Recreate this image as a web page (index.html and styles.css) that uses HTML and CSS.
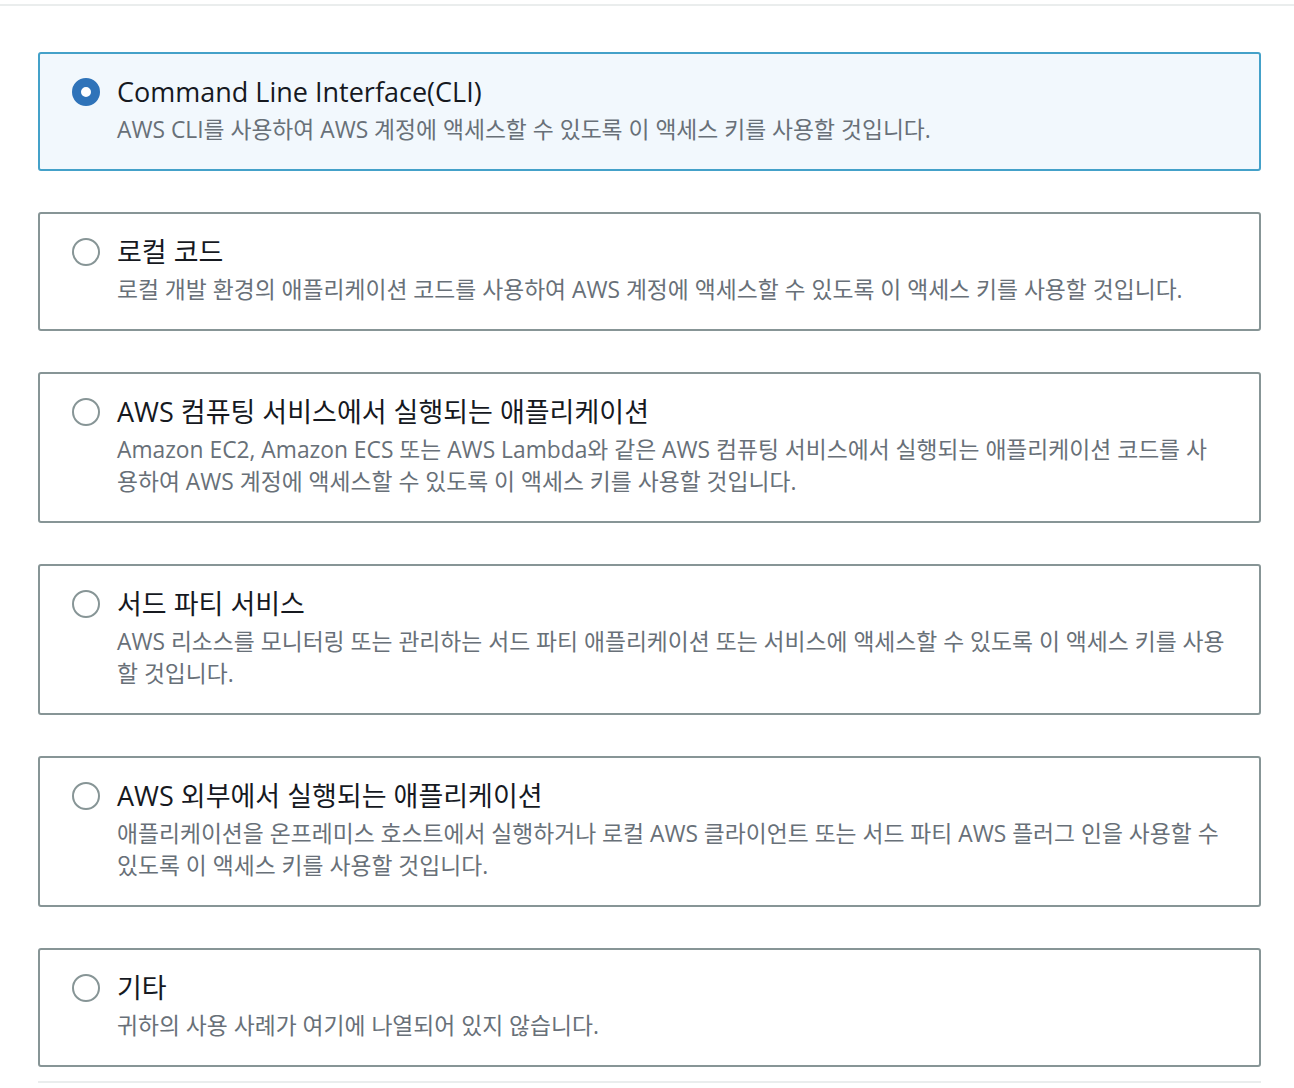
FILE: index.html
```html
<!DOCTYPE html>
<html lang="ko">
<head>
    <meta charset="UTF-8">
    <meta name="viewport" content="width=device-width, initial-scale=1.0">
    <title>액세스 키 사용 사례</title>
    <link rel="stylesheet" href="styles.css">
</head>
<body>

    <div class="top-rule"></div>

    <div class="use-cases">
        <div class="tile selected">
            <span class="radio"></span>
            <div class="tile-text">
                <div class="tile-title">Command Line Interface(CLI)</div>
                <div class="tile-desc">AWS CLI를 사용하여 AWS 계정에 액세스할 수 있도록 이 액세스 키를 사용할 것입니다.</div>
            </div>
        </div>

        <div class="tile">
            <span class="radio"></span>
            <div class="tile-text">
                <div class="tile-title">로컬 코드</div>
                <div class="tile-desc">로컬 개발 환경의 애플리케이션 코드를 사용하여 AWS 계정에 액세스할 수 있도록 이 액세스 키를 사용할 것입니다.</div>
            </div>
        </div>

        <div class="tile">
            <span class="radio"></span>
            <div class="tile-text">
                <div class="tile-title">AWS 컴퓨팅 서비스에서 실행되는 애플리케이션</div>
                <div class="tile-desc">Amazon EC2, Amazon ECS 또는 AWS Lambda와 같은 AWS 컴퓨팅 서비스에서 실행되는 애플리케이션 코드를 사용하여 AWS 계정에 액세스할 수 있도록 이 액세스 키를 사용할 것입니다.</div>
            </div>
        </div>

        <div class="tile">
            <span class="radio"></span>
            <div class="tile-text">
                <div class="tile-title">서드 파티 서비스</div>
                <div class="tile-desc">AWS 리소스를 모니터링 또는 관리하는 서드 파티 애플리케이션 또는 서비스에 액세스할 수 있도록 이 액세스 키를 사용할 것입니다.</div>
            </div>
        </div>

        <div class="tile">
            <span class="radio"></span>
            <div class="tile-text">
                <div class="tile-title">AWS 외부에서 실행되는 애플리케이션</div>
                <div class="tile-desc">애플리케이션을 온프레미스 호스트에서 실행하거나 로컬 AWS 클라이언트 또는 서드 파티 AWS 플러그 인을 사용할 수 있도록 이 액세스 키를 사용할 것입니다.</div>
            </div>
        </div>

        <div class="tile">
            <span class="radio"></span>
            <div class="tile-text">
                <div class="tile-title">기타</div>
                <div class="tile-desc">귀하의 사용 사례가 여기에 나열되어 있지 않습니다.</div>
            </div>
        </div>

        <div class="bottom-rule"></div>
    </div>

</body>
</html>
```

FILE: styles.css
```css
body {
    margin: 0;
    padding: 0;
    background-color: #fff;
    font-family: "Open Sans", "Noto Sans CJK KR", sans-serif;
    color: #16191f;
}

.top-rule {
    height: 2px;
    margin-top: 4px;
    background-color: #eaeded;
}

.use-cases {
    display: flex;
    flex-direction: column;
    gap: 41px;
    padding: 46px 33px 0 38px;
}

.tile {
    display: flex;
    align-items: flex-start;
    gap: 17px;
    padding: 20px 32px 23px 32px;
    border: 2px solid #879596;
    border-radius: 3px;
    background-color: #fff;
}

.tile.selected {
    border-color: #44a1c9;
    background-color: #f2f8fd;
}

.radio {
    flex: none;
    box-sizing: border-box;
    width: 28px;
    height: 28px;
    margin-top: 4px;
    border: 2px solid #879596;
    border-radius: 50%;
    background-color: #fff;
}

.tile.selected .radio {
    border: 9px solid #2f73b9;
}

.tile-text {
    flex: 1;
    min-width: 0;
}

.tile-title {
    font-size: 27px;
    line-height: 36px;
    color: #16191f;
}

.tile-desc {
    margin-top: 4px;
    font-size: 22.8px;
    line-height: 32px;
    color: #687078;
}

.bottom-rule {
    height: 2px;
    margin-top: -27px;
    background-color: #eaeded;
}
```
